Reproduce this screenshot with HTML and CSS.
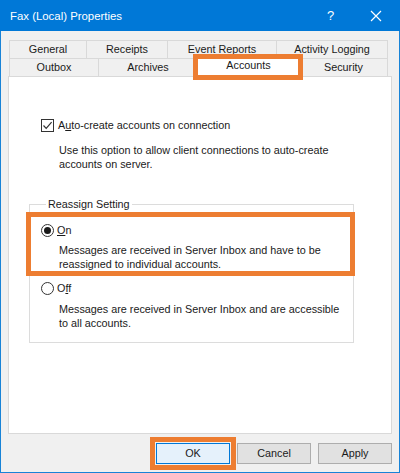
FILE: index.html
```html
<!DOCTYPE html>
<html>
<head>
<meta charset="utf-8">
<link rel="stylesheet" href="styles.css">
</head>
<body>
<div class="window">
  <div class="titlebar">
    <span class="title">Fax (Local) Properties</span>
    <span class="help">?</span>
    <span class="close"><svg width="12" height="12" viewBox="0 0 12 12"><path d="M1 1L11 11M11 1L1 11" stroke="#fff" stroke-width="1.2" fill="none"/></svg></span>
  </div>
  <div class="body">
    <div class="tabs">
      <div class="tabrow">
        <div class="tab w-general">General</div>
        <div class="tab w-receipts">Receipts</div>
        <div class="tab w-event">Event Reports</div>
        <div class="tab w-activity last">Activity Logging</div>
      </div>
      <div class="tabrow">
        <div class="tab w-outbox">Outbox</div>
        <div class="tab w-archives">Archives</div>
        <div class="tab selected w-accounts">Accounts</div>
        <div class="tab w-security last">Security</div>
      </div>
      <div class="hl hl-tab"></div>
    </div>
    <div class="panel">
      <div class="check-row">
        <span class="checkbox"><svg width="11" height="11" viewBox="0 0 11 11"><path d="M1.5 5.5L4.2 8.3L9.6 2.2" stroke="#333" stroke-width="1.2" fill="none"/></svg></span>
        <span class="label">A<u>u</u>to-create accounts on connection</span>
      </div>
      <p class="desc first">Use this option to allow client connections to auto-create<br>accounts on server.</p>
      <fieldset class="group">
        <legend>Reassign Setting</legend>
        <div class="opt on">
          <div class="radio-row">
            <span class="radio checked"><span class="dot"></span></span>
            <span class="label"><u>O</u>n</span>
          </div>
          <p class="desc">Messages are received in Server Inbox and have to be<br>reassigned to individual accounts.</p>
          <div class="hl hl-on"></div>
        </div>
        <div class="opt off">
          <div class="radio-row">
            <span class="radio"></span>
            <span class="label">O<u>f</u>f</span>
          </div>
          <p class="desc">Messages are received in Server Inbox and are accessible<br>to all accounts.</p>
        </div>
      </fieldset>
    </div>
    <div class="buttons">
      <div class="btn-wrap">
        <div class="btn default">OK</div>
        <div class="hl hl-ok"></div>
      </div>
      <div class="btn">Cancel</div>
      <div class="btn">Apply</div>
    </div>
  </div>
</div>
</body>
</html>
```

FILE: styles.css
```css
* { box-sizing: border-box; }
html, body { margin: 0; padding: 0; }
body {
  font-family: "Liberation Sans", Arial, sans-serif;
  font-size: 10.8px;
  color: #1a1a1a;
  background: #fff;
}
.window {
  width: 400px;
  height: 473px;
  background: #f0f0f0;
  border: 1px solid #1883d7;
  border-top: none;
  display: flex;
  flex-direction: column;
}
.titlebar {
  height: 31px;
  background: #0078d7;
  color: #fff;
  display: flex;
  align-items: center;
  margin: 0 -1px;
  padding-left: 10px;
  font-size: 11.4px;
}
.title { flex: 1; }
.help { width: 12px; margin-right: 31px; font-size: 13px; }
.close { width: 12px; margin-right: 18px; display: flex; }
.body {
  flex: 1;
  padding: 9px 7px 0 7px;
  display: flex;
  flex-direction: column;
}
.tabs {
  position: relative;
  padding-left: 1px;
}
.tabrow {
  display: flex;
  height: 18px;
}
.tab {
  height: 18px;
  border-top: 1px solid #d9d9d9;
  border-left: 1px solid #d9d9d9;
  background: #f0f0f0;
  text-align: center;
  line-height: 16px;
  white-space: nowrap;
}
.tab.last { border-right: 1px solid #d9d9d9; }
.tab.selected {
  background: #fff;
  height: 21px;
  margin-top: -2px;
  position: relative;
  z-index: 1;
  line-height: 17px;
}
.w-general { width: 77px; }
.w-receipts { width: 81px; }
.w-event { width: 109px; }
.w-activity { width: 112px; }
.w-outbox { width: 89px; }
.w-archives { width: 99px; }
.w-accounts { width: 103px; border-right: 1px solid #d9d9d9; }
.w-security { width: 88px; border-left: none; }
.hl {
  position: absolute;
  border: 5px solid #ed7d31;
  pointer-events: none;
  z-index: 2;
}
.hl-tab { left: 185px; top: 14px; width: 110px; height: 26px; }
.panel {
  height: 358px;
  background: #fff;
  border: 1px solid #d9d9d9;
  padding: 41px 0 0 32px;
  position: relative;
  z-index: 0;
}
.check-row, .radio-row {
  display: flex;
  align-items: center;
  height: 14px;
}
.checkbox {
  width: 13px;
  height: 13px;
  border: 1px solid #333;
  background: #fff;
  display: flex;
  align-items: center;
  justify-content: center;
  margin-right: 4px;
}
.desc {
  margin: 0;
  padding-left: 18px;
  line-height: 13.5px;
  white-space: nowrap;
}
.desc.first { margin-top: 12px; }
.group {
  margin: 27px 0 0 -12px;
  width: 325px;
  height: 145px;
  border: 1px solid #dcdcdc;
  padding: 0 0 0 11px;
}
.group legend {
  padding: 0 2px;
  margin-left: 5px;
  line-height: 13px;
}
.opt { position: relative; }
.opt.on { padding-top: 12px; }
.opt.off { padding-top: 10px; }
.radio {
  width: 13px;
  height: 13px;
  border: 1px solid #333;
  border-radius: 50%;
  background: #fff;
  display: flex;
  align-items: center;
  justify-content: center;
  margin-right: 3px;
}
.dot {
  width: 7px;
  height: 7px;
  border-radius: 50%;
  background: #1a1a1a;
}
.opt .desc { margin-top: 7px; padding-left: 18px; }
.opt.off .desc { margin-top: 8px; }
.hl-on { left: -15px; top: 1px; width: 329px; height: 64px; }
.buttons {
  display: flex;
  justify-content: flex-end;
  gap: 7px;
  margin-top: 9px;
}
.btn-wrap { position: relative; display: flex; }
.btn {
  width: 74px;
  height: 21px;
  border: 1px solid #adadad;
  background: #e1e1e1;
  text-align: center;
  line-height: 19px;
}
.btn.default {
  border-color: #0078d7;
  background: #e5f1fb;
}
.hl-ok { left: -6px; top: -6px; width: 86px; height: 33px; }
```
